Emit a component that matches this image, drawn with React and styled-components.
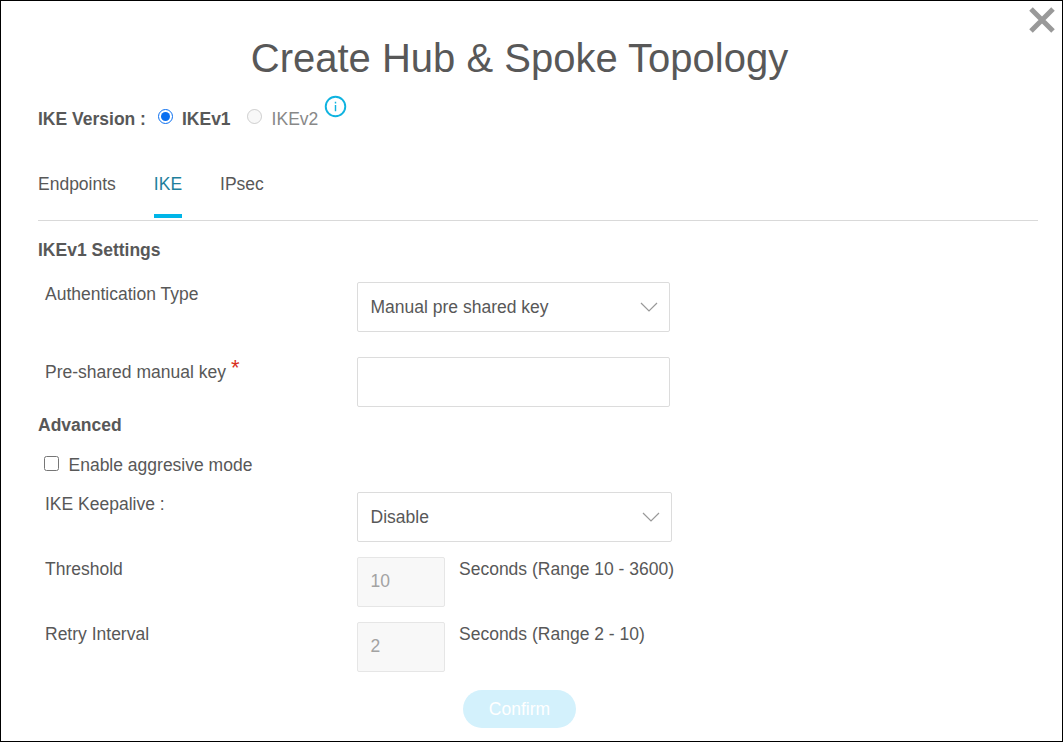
import React from "react";
import styled, { createGlobalStyle } from "styled-components";

const Global = createGlobalStyle`
  html, body { margin: 0; padding: 0; background: #fff; }
  body { font-family: "Liberation Sans", Arial, sans-serif; color: #585858; font-size: 17.5px; }
`;

const Dialog = styled.div`
  position: relative;
  box-sizing: border-box;
  width: 1063px;
  height: 742px;
  border: 1px solid #000;
  overflow: hidden;
  background: #fff;
`;

const CloseButton = styled.button`
  position: absolute;
  top: 5px;
  right: 6px;
  width: 28px;
  height: 28px;
  padding: 0;
  border: 0;
  background: none;
  display: flex;
`;

const Title = styled.h1`
  margin: 0;
  padding: 32px 24px 0 0;
  height: 50px;
  font-size: 40px;
  line-height: 50px;
  font-weight: 400;
  text-align: center;
  color: #585858;
`;

const Body = styled.div`
  padding: 0 24px 0 37px;
`;

const VersionRow = styled.div`
  display: flex;
  align-items: flex-start;
  height: 57px;
  margin-top: 12px;
  line-height: 20px;
  padding-top: 14px;
  box-sizing: border-box;
`;

const VersionLabel = styled.span`
  font-weight: 700;
  margin-right: 12px;
`;

const RadioGroup = styled.label`
  display: flex;
  align-items: flex-start;
  font-weight: ${(p) => (p.$active ? 700 : 400)};
  color: ${(p) => (p.$disabled ? "#888" : "#585858")};
  margin-right: ${(p) => p.$gap}px;
`;

const RadioDot = styled.input.attrs({ type: "radio" })`
  width: 15px;
  height: 15px;
  margin: 0 ${(p) => p.$gap}px 0 0;
  accent-color: #0a6ff0;
`;

const InfoBadge = styled.span`
  display: flex;
  margin-top: -14px;
  margin-left: 6px;
`;

const Tabs = styled.div`
  display: flex;
  gap: 38px;
  height: 68px;
  border-bottom: 1px solid #d9d9d9;
`;

const Tab = styled.div`
  height: 66px;
  box-sizing: border-box;
  padding-top: 22px;
  line-height: 20px;
  color: ${(p) => (p.$active ? "#1f7f9c" : "#585858")};
  border-bottom: 4px solid ${(p) => (p.$active ? "#00b5e8" : "transparent")};
`;

const SectionTitle = styled.div`
  font-weight: 700;
  line-height: 20px;
  margin-top: ${(p) => p.$top}px;
`;

const FieldRow = styled.div`
  display: grid;
  grid-template-columns: 319px 1fr;
  margin-top: ${(p) => p.$top}px;
`;

const FieldLabel = styled.div`
  padding: ${(p) => p.$pad}px 0 0 7px;
  line-height: 20px;
`;

const Required = styled.span`
  color: #d9301f;
  font-size: 22px;
  line-height: 0;
  margin-left: 5px;
  position: relative;
  top: -3px;
`;

const SelectBox = styled.div`
  box-sizing: border-box;
  width: ${(p) => p.$width}px;
  height: 50px;
  border: 1px solid #dcdcdc;
  border-radius: 2px;
  padding: 0 11px 0 12.5px;
  display: flex;
  align-items: center;
  justify-content: space-between;
`;

const TextBox = styled.input`
  box-sizing: border-box;
  width: 313px;
  height: 50px;
  border: 1px solid #dcdcdc;
  border-radius: 2px;
  background: #fff;
  display: block;
`;

const CheckRow = styled.label`
  display: flex;
  align-items: center;
  height: 20px;
  margin: 20px 0 0 6px;
`;

const CheckInput = styled.input.attrs({ type: "checkbox" })`
  width: 15px;
  height: 15px;
  margin: 0 9.5px 0 0;
  position: relative;
  top: -2px;
`;

const NumberRow = styled.div`
  display: flex;
  align-items: flex-start;
`;

const NumberBox = styled.div`
  box-sizing: border-box;
  width: 88px;
  height: 50px;
  border: 1px solid #e6e6e6;
  border-radius: 2px;
  background: #f8f8f8;
  color: #a3a3a3;
  display: flex;
  align-items: center;
  padding: 0 0 2px 12.5px;
`;

const Hint = styled.span`
  margin-left: 14px;
  line-height: 20px;
  padding-top: 2px;
  white-space: nowrap;
`;

const Footer = styled.div`
  display: flex;
  justify-content: center;
  margin-top: 18px;
  padding-right: 39px;
  margin-left: 2px;
`;

const Confirm = styled.button`
  width: 113px;
  height: 38px;
  border: 0;
  border-radius: 19px;
  background: #d3f1fc;
  color: #fff;
  font-family: "Liberation Sans", Arial, sans-serif;
  font-size: 17.5px;
`;

const Chevron = () => (
  <svg width="18" height="10" viewBox="0 0 18 10" fill="none" stroke="#999" strokeWidth="1.2">
    <path d="M1 1l8 8 8-8" />
  </svg>
);

export default function App() {
  return (
    <>
      <Global />
      <Dialog>
        <CloseButton aria-label="Close">
          <svg width="28" height="28" viewBox="0 0 28 28" stroke="#999" strokeWidth="5" fill="none">
            <path d="M3 3l22 22M25 3L3 25" />
          </svg>
        </CloseButton>
        <Title>Create Hub &amp; Spoke Topology</Title>
        <Body>
          <VersionRow>
            <VersionLabel>IKE Version :</VersionLabel>
            <RadioGroup $active $gap={16}>
              <RadioDot $gap={9} name="v" defaultChecked />
              IKEv1
            </RadioGroup>
            <RadioGroup $disabled $gap={0}>
              <RadioDot $gap={10} name="v" disabled />
              IKEv2
            </RadioGroup>
            <InfoBadge>
              <svg width="23" height="23" viewBox="0 0 24 24" fill="none" stroke="#0fb3e0" strokeWidth="2">
                <circle cx="12" cy="12" r="10.2" />
                <path d="M12 10.5v6.5M12 7v1.8" strokeWidth="1.5" />
              </svg>
            </InfoBadge>
          </VersionRow>
          <Tabs>
            <Tab>Endpoints</Tab>
            <Tab $active>IKE</Tab>
            <Tab>IPsec</Tab>
          </Tabs>
          <SectionTitle $top={19}>IKEv1 Settings</SectionTitle>
          <FieldRow $top={22}>
            <FieldLabel $pad={2}>Authentication Type</FieldLabel>
            <SelectBox $width={313}>
              Manual pre shared key
              <Chevron />
            </SelectBox>
          </FieldRow>
          <FieldRow $top={25}>
            <FieldLabel $pad={5}>
              Pre-shared manual key<Required>*</Required>
            </FieldLabel>
            <TextBox aria-label="Pre-shared manual key" />
          </FieldRow>
          <SectionTitle $top={8}>Advanced</SectionTitle>
          <CheckRow>
            <CheckInput />
            Enable aggresive mode
          </CheckRow>
          <FieldRow $top={17}>
            <FieldLabel $pad={2}>IKE Keepalive :</FieldLabel>
            <SelectBox $width={315}>
              Disable
              <Chevron />
            </SelectBox>
          </FieldRow>
          <FieldRow $top={15}>
            <FieldLabel $pad={2}>Threshold</FieldLabel>
            <NumberRow>
              <NumberBox>10</NumberBox>
              <Hint>Seconds (Range 10 - 3600)</Hint>
            </NumberRow>
          </FieldRow>
          <FieldRow $top={15}>
            <FieldLabel $pad={2}>Retry Interval</FieldLabel>
            <NumberRow>
              <NumberBox>2</NumberBox>
              <Hint>Seconds (Range 2 - 10)</Hint>
            </NumberRow>
          </FieldRow>
          <Footer>
            <Confirm>Confirm</Confirm>
          </Footer>
        </Body>
      </Dialog>
    </>
  );
}
